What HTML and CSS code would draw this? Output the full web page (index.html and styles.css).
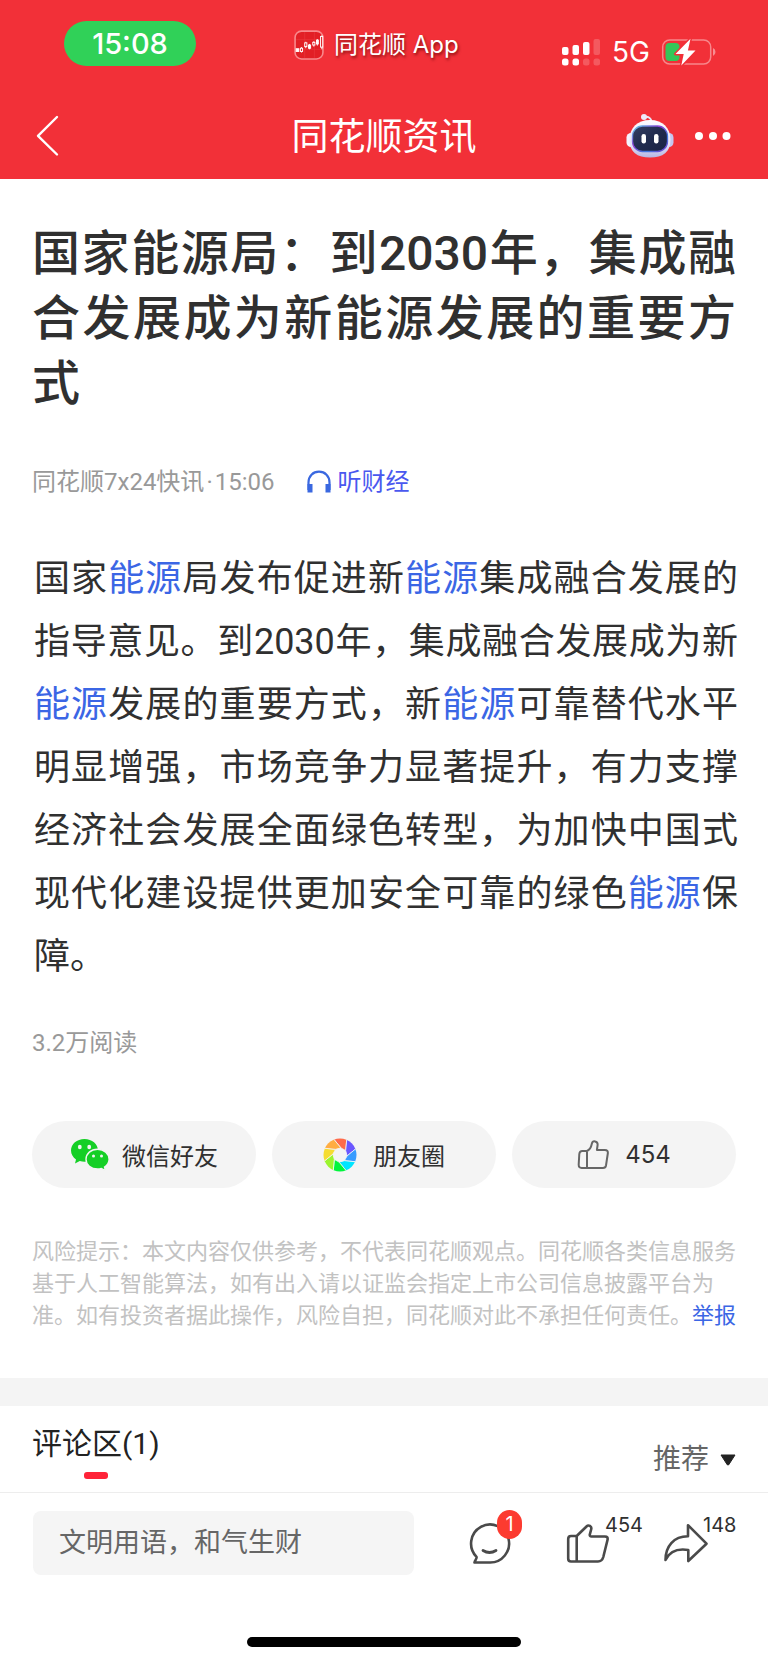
FILE: index.html
```html
<!DOCTYPE html>
<html lang="zh-CN">
<head>
<meta charset="utf-8">
<meta name="viewport" content="width=device-width, initial-scale=1">
<title>同花顺资讯</title>
<link rel="stylesheet" href="styles.css">
</head>
<body>
<div class="page">
  <header class="top">
    <div class="status">
      <span class="clock">15:08</span>
      <div class="app">
        <svg class="app-icon" viewBox="0 0 28 28" aria-hidden="true">
          <rect x="1" y="1" width="26" height="26" rx="6" fill="#e21f25" stroke="#f8898c" stroke-width="1.5"/>
          <path d="M2 9h24M2 18h24M10 2v24M19 2v24" stroke="#e9383d" stroke-width=".6"/>
          <g fill="#fff" stroke="#fff" stroke-width=".9">
            <rect x="2" y="17.500" width="2.500" height="2.500"/>
            <path d="M7 16v5M11 11v6M14.500 13v5M18.500 10.500v5M21.800 8.500v6M26 5v13"/>
            <rect x="6" y="17" width="2" height="3" fill="#e21f25"/>
            <rect x="10" y="12" width="2" height="3.500" fill="#e21f25"/>
            <rect x="13.500" y="14" width="2" height="3"/>
            <rect x="17.500" y="11.500" width="2" height="2.500" fill="#e21f25"/>
            <rect x="21" y="9.500" width="1.700" height="3.500"/>
            <rect x="24.800" y="6" width="2" height="10" fill="#e21f25"/>
          </g>
        </svg>
        <span>同花顺 App</span>
      </div>
      <div class="signals">
        <svg class="signal" viewBox="0 0 40 28" aria-hidden="true" fill="#fff">
          <rect x="1" y="9" width="6.500" height="8" rx="2"/>
          <rect x="11.500" y="7" width="6.500" height="10" rx="2"/>
          <rect x="22" y="4" width="6.500" height="13" rx="2"/>
          <rect x="32.500" y="1" width="6.500" height="16" rx="2" opacity=".2"/>
          <rect x="1" y="20.500" width="6.500" height="7" rx="2.500"/>
          <rect x="11.500" y="20.500" width="6.500" height="7" rx="2.500"/>
          <rect x="22" y="20.500" width="6.500" height="7" rx="2.500" opacity=".2"/>
          <rect x="32.500" y="20.500" width="6.500" height="7" rx="2.500" opacity=".2"/>
        </svg>
        <span class="network">5G</span>
        <svg class="battery" viewBox="0 0 56 28" aria-hidden="true">
          <rect x="1.700" y="2" width="48" height="24" rx="7" fill="none" stroke="#fff" stroke-opacity=".42" stroke-width="1.500"/>
          <path d="M52 10q2.500 1.200 2.500 4t-2.500 4z" fill="#fff" fill-opacity=".45"/>
          <rect x="4.500" y="5" width="14" height="18" rx="4" fill="#34c759"/>
          <path d="M29.500 .8 14.500 16h8.200l-2.400 11.500L34.500 12.400h-7.600z" fill="#fff" stroke="#f23038" stroke-width="3" paint-order="stroke" stroke-linejoin="round"/>
        </svg>
      </div>
    </div>
    <nav class="nav">
      <button class="icon-button back" type="button" aria-label="返回">
        <svg viewBox="0 0 24 42" width="24" height="42" fill="none" stroke="#fff" stroke-width="2.400" stroke-linecap="round" stroke-linejoin="round"><path d="M21 2 2 20.800 21 39.500"/></svg>
      </button>
      <h1 class="nav-title">同花顺资讯</h1>
      <div class="nav-actions">
        <button class="icon-button" type="button" aria-label="智能助手">
          <svg viewBox="0 0 48 46" width="48" height="46">
            <defs>
              <linearGradient id="shell" x1="0" y1="0" x2="0" y2="1"><stop offset="0" stop-color="#fdfcff"/><stop offset=".65" stop-color="#e6e3f7"/><stop offset="1" stop-color="#b5b6e3"/></linearGradient>
              <linearGradient id="rim" x1="0" y1="0" x2="1" y2="1"><stop offset="0" stop-color="#58d5e8"/><stop offset=".4" stop-color="#8d3fd6"/><stop offset=".7" stop-color="#3d79df"/><stop offset="1" stop-color="#7b37cb"/></linearGradient>
              <linearGradient id="face" x1="0" y1="0" x2="1" y2="1"><stop offset="0" stop-color="#353f62"/><stop offset=".5" stop-color="#202b4e"/><stop offset="1" stop-color="#1a2243"/></linearGradient>
            </defs>
            <path d="M18 4q7-1 7.500 5" fill="none" stroke="#e9e5f5" stroke-width="2"/>
            <circle cx="18" cy="4" r="3" fill="#efeafa"/>
            <rect x="0.500" y="20" width="9" height="14" rx="4.500" fill="#f5f3ff"/>
            <rect x="38.500" y="20" width="9" height="14" rx="4.500" fill="#c5c6ef"/>
            <path d="M24 7c13 0 20.500 8 20.500 20S37 44.500 24 44.500 3.500 39 3.500 27 11 7 24 7z" fill="url(#shell)"/>
            <rect x="6.500" y="13" width="35" height="25.500" rx="10" fill="url(#face)" stroke="url(#rim)" stroke-width="1.300"/>
            <rect x="15.500" y="21" width="4.500" height="9.500" rx="2.200" fill="#fff"/>
            <rect x="28" y="21" width="4.500" height="9.500" rx="2.200" fill="#fff"/>
          </svg>
        </button>
        <button class="icon-button" type="button" aria-label="更多">
          <svg viewBox="0 0 38 12" width="38" height="12" fill="#fff"><circle cx="5" cy="6" r="4"/><circle cx="19" cy="6" r="4"/><circle cx="32.500" cy="6" r="4"/></svg>
        </button>
      </div>
    </nav>
  </header>

  <main>
    <article class="article">
      <h2 class="headline">国家能源局：到2030年，集成融合发展成为新能源发展的重要方式</h2>
      <div class="meta">
        <span>同花顺7x24快讯<span class="dot">·</span>15:06</span>
        <button class="listen" type="button">
          <svg viewBox="0 0 26 24" width="26" height="24" fill="none" stroke="#3a68e0" aria-hidden="true"><path d="M2.500 20V12.500C2.500 6 7 1.700 13 1.700S23.500 6 23.500 12.500V20" stroke-width="2.200"/><path d="M4 14v8.500M22 14v8.500" stroke-width="5"/></svg>
          听财经
        </button>
      </div>
      <p class="body-text">国家<a href="#energy">能源</a>局发布促进新<a href="#energy">能源</a>集成融合发展的指导意见。到2030年，集成融合发展成为新<a href="#energy">能源</a>发展的重要方式，新<a href="#energy">能源</a>可靠替代水平明显增强，市场竞争力显著提升，有力支撑经济社会发展全面绿色转型，为加快中国式现代化建设提供更加安全可靠的绿色<a href="#energy">能源</a>保障。</p>
      <p class="reads">3.2万阅读</p>
      <div class="share-row">
        <button class="pill" type="button">
          <svg viewBox="0 0 40 34" width="40" height="34" aria-hidden="true">
            <path d="M14.500 1C6.800 1 1 6 1 12.500c0 3.700 2 6.900 5 9L5 25.500l4.800-2.400c1.600.5 3 .7 4.700.7C22 23.800 28 19 28 12.500S22 1 14.500 1z" fill="#15cf26"/>
            <path d="M27.500 11.200C21 11.200 16 15.600 16 21.200S21 31 27.500 31c1.300 0 2.700-.2 3.900-.6l4.100 2.200-1-3.500c2.800-1.900 4.600-4.700 4.600-7.900 0-5.600-5.100-10-11.600-10z" fill="#15cf26" stroke="#f4f4f4" stroke-width="1.400"/>
            <ellipse cx="9.800" cy="9" rx="1.900" ry="2.200" fill="#f4f4f4"/><ellipse cx="19.200" cy="9" rx="1.900" ry="2.200" fill="#f4f4f4"/>
            <circle cx="23.500" cy="18" r="1.500" fill="#f4f4f4"/><circle cx="31.500" cy="18" r="1.500" fill="#f4f4f4"/>
          </svg>
          微信好友
        </button>
        <button class="pill pill-wide" type="button">
          <svg viewBox="0 0 34 34" width="34" height="34" aria-hidden="true">
            <defs><clipPath id="disc"><circle cx="17" cy="17" r="16.500"/></clipPath></defs>
            <g clip-path="url(#disc)" stroke="#f4f4f4" stroke-width=".8">
              <path d="M22.700 12.600 24-1 9.200-.7 17.900 9.900z" fill="#ff6b4b"/>
              <path d="M22.700 12.600 24-1 9.200-.7 17.900 9.900z" fill="#6b57ff" transform="rotate(45 17 17)"/>
              <path d="M22.700 12.600 24-1 9.200-.7 17.900 9.900z" fill="#389bff" transform="rotate(90 17 17)"/>
              <path d="M22.700 12.600 24-1 9.200-.7 17.900 9.900z" fill="#00e5ff" transform="rotate(135 17 17)"/>
              <path d="M22.700 12.600 24-1 9.200-.7 17.900 9.900z" fill="#00f53c" transform="rotate(180 17 17)"/>
              <path d="M22.700 12.600 24-1 9.200-.7 17.900 9.900z" fill="#9cf52f" transform="rotate(225 17 17)"/>
              <path d="M22.700 12.600 24-1 9.200-.7 17.900 9.900z" fill="#f5dc32" transform="rotate(270 17 17)"/>
              <path d="M22.700 12.600 24-1 9.200-.7 17.900 9.900z" fill="#ffad42" transform="rotate(315 17 17)"/>
            </g>
          </svg>
          朋友圈
        </button>
        <button class="pill pill-wide" type="button">
          <svg viewBox="0 0 32 32" width="32" height="32" fill="none" stroke="#666" stroke-width="2" stroke-linejoin="round" aria-hidden="true">
            <path d="M10 12H5.300C3.300 12 2.500 13 2.300 15L1.700 25.500C1.600 28 2.600 29 4.600 29H10zM10 12C13.500 10.500 14.300 7.500 14.900 4.500 15.600 1.300 21 1.700 20.600 6L19.900 11h8c2.300 0 3.200 1.200 2.900 3.500L29 26.500C28.700 28.200 27.800 29 26 29H10"/>
          </svg>
          <span class="pill-count">454</span>
        </button>
      </div>
      <p class="disclaimer">风险提示：本文内容仅供参考，不代表同花顺观点。同花顺各类信息服务基于人工智能算法，如有出入请以证监会指定上市公司信息披露平台为准。如有投资者据此操作，风险自担，同花顺对此不承担任何责任。<a href="#report">举报</a></p>
    </article>

    <section class="comments">
      <h2 class="comments-title">评论区(1)</h2>
      <label class="sort">
        <select aria-label="评论排序"><option>推荐</option></select>
        <svg viewBox="0 0 16 12" width="16" height="12" aria-hidden="true"><path d="M1 1h14L8.900 10.500a1 1 0 0 1-1.800 0z" fill="#222" stroke="#222" stroke-linejoin="round"/></svg>
      </label>
    </section>
  </main>

  <footer class="bottom">
    <div class="toolbar">
      <input class="comment-input" type="text" placeholder="文明用语，和气生财" aria-label="发表评论">
      <button class="icon-button tool" type="button" aria-label="评论">
        <svg viewBox="0 0 44 44" width="44" height="44" fill="none" stroke="#4a4a4a" stroke-width="2.600" stroke-linecap="round" stroke-linejoin="round"><path d="M6.500 41.500H21.500A19 19 0 1 0 8.500 35.800C9.300 37.200 7 39 6.500 41.500z"/><path d="M15 29.500q6.500 4 13 0" stroke-width="2.800"/></svg>
        <span class="badge">1</span>
      </button>
      <button class="icon-button tool" type="button" aria-label="点赞">
        <svg viewBox="0 0 44 44" width="44" height="44" fill="none" stroke="#4a4a4a" stroke-width="2.600" stroke-linejoin="round"><path d="M10.700 15H5Q2.200 15 2.200 18V37.500Q2.200 40.500 5 40.500H10.700zM10.700 15 20.500 5.500C22.500 3.500 26 5 25.200 8.200L23.800 13.500Q23.500 15.500 25.500 15.500H39Q42.300 15.500 41.500 19L37.300 36Q36 40.500 32 40.500H10.700"/></svg>
        <span class="count">454</span>
      </button>
      <button class="icon-button tool" type="button" aria-label="分享">
        <svg viewBox="0 0 44 44" width="44" height="44" fill="none" stroke="#4a4a4a" stroke-width="2.600" stroke-linejoin="round"><path d="M1.500 39C1.500 25.500 9.500 15.300 24 15.300V4.200L42.500 22.700 24.300 40V29C15 27.500 6 29.500 1.500 39z"/></svg>
        <span class="count">148</span>
      </button>
    </div>
    <div class="home-bar"></div>
  </footer>
</div>
</body>
</html>
```
FILE: styles.css
```css
* {
  box-sizing: border-box;
}

body {
  margin: 0;
  background: #fff;
  color: #303030;
  font-family: Roboto, "Noto Sans CJK SC", sans-serif;
}

h1, h2, p {
  margin: 0;
}

svg {
  display: block;
  flex: none;
}

button, input, select {
  font: inherit;
  color: inherit;
}

button {
  border: 0;
  padding: 0;
  background: none;
}

a {
  color: #3b66e5;
  text-decoration: none;
}

.page {
  display: flex;
  flex-direction: column;
  min-height: 100vh;
}

/* Header */
.top {
  background: #f23038;
  color: #fff;
}

.status {
  display: grid;
  grid-template-columns: 230px auto 1fr;
  align-items: start;
  height: 92px;
  padding: 21px 51px 0 64px;
  font-family: Inter, "Noto Sans CJK SC", sans-serif;
}

.clock {
  justify-self: start;
  width: 132px;
  border-radius: 23px;
  background: #30d158;
  font-size: 29px;
  font-weight: 500;
  line-height: 45px;
  text-align: center;
}

.app {
  display: flex;
  align-items: center;
  gap: 10px;
  padding-top: 6px;
  font-size: 24px;
  line-height: 36px;
  text-shadow: 1px 2px 3px rgba(90, 0, 0, .7);
}

.app-icon {
  width: 30px;
  height: 30px;
}

.signals {
  display: flex;
  align-items: center;
  justify-self: end;
  gap: 11px;
  padding-top: 13px;
}

.signal {
  width: 40px;
  height: 28px;
}

.network {
  font-size: 28px;
  line-height: 36px;
}

.battery {
  width: 56px;
  height: 28px;
}

.nav {
  display: grid;
  grid-template-columns: 1fr auto 1fr;
  align-items: center;
  height: 87px;
  padding: 0 36px;
}

.back {
  justify-self: start;
}

.nav-title {
  padding-bottom: 4px;
  font-size: 37px;
  font-weight: 400;
}

.nav-actions {
  display: flex;
  align-items: center;
  justify-self: end;
  gap: 20px;
}

/* Article */
.article {
  padding: 42px 32px 46px;
}

.headline {
  font-size: 48px;
  font-weight: 500;
  line-height: 65px;
  text-align: justify;
}

.meta {
  display: flex;
  align-items: center;
  gap: 32px;
  margin-top: 50px;
  color: #999;
  font-size: 24px;
  line-height: 32px;
}

.dot {
  margin: 0 2px;
}

.listen {
  display: flex;
  align-items: center;
  gap: 5px;
  color: #4a58ef;
}

.body-text {
  margin: 50px -2px 0 2px;
  font-size: 36px;
  line-height: 63px;
  text-align: justify;
}

.reads {
  margin-top: 38px;
  color: #999;
  font-size: 24px;
  line-height: 32px;
}

.share-row {
  display: grid;
  grid-template-columns: repeat(3, 1fr);
  gap: 16px;
  margin-top: 62px;
}

.pill {
  display: flex;
  align-items: center;
  justify-content: center;
  gap: 12px;
  height: 67px;
  border-radius: 34px;
  background: #f4f4f4;
  font-size: 24px;
}

.pill-wide {
  gap: 16px;
}

.pill-count {
  font-family: Inter, sans-serif;
}

.disclaimer {
  margin: 48px -4px 0 0;
  color: #c2c2c2;
  font-size: 22px;
  line-height: 32px;
}

/* Comments */
.comments {
  display: flex;
  align-items: flex-start;
  justify-content: space-between;
  height: 114px;
  border-top: 28px solid #f4f4f4;
  padding: 18px 32px 0;
}

.comments-title {
  color: #222;
  font-size: 30px;
  font-weight: 400;
  line-height: 40px;
}

.comments-title::after {
  content: "";
  display: block;
  width: 24px;
  height: 7px;
  margin: 8px auto 0;
  border-radius: 3px;
  background: #ff2338;
}

.sort {
  display: flex;
  align-items: center;
  gap: 10px;
  padding-top: 16px;
  color: #666;
  font-size: 28px;
}

.sort select {
  appearance: none;
  border: 0;
  padding: 0;
  background: none;
  line-height: 40px;
}

/* Bottom bar */
.bottom {
  border-top: 1px solid #ededed;
}

.toolbar {
  display: flex;
  align-items: center;
  gap: 54px;
  padding: 18px 60px 0 33px;
}

.comment-input {
  flex: 1;
  min-width: 0;
  height: 64px;
  border: 0;
  border-radius: 8px;
  padding: 0 26px;
  background: #f5f5f5;
  font-size: 27px;
}

.comment-input::placeholder {
  color: #666;
  opacity: 1;
}

.tool {
  position: relative;
}

.badge {
  position: absolute;
  top: -11px;
  left: 29px;
  width: 25px;
  border-radius: 13px;
  background: #fc3b30;
  color: #fff;
  font-family: Inter, sans-serif;
  font-size: 20px;
  line-height: 29px;
}

.count {
  position: absolute;
  top: -10px;
  left: 39px;
  font-family: Inter, sans-serif;
  font-size: 20px;
  line-height: 28px;
}

.home-bar {
  width: 274px;
  height: 10px;
  margin: 62px auto 17px;
  border-radius: 5px;
  background: #000;
}
```
